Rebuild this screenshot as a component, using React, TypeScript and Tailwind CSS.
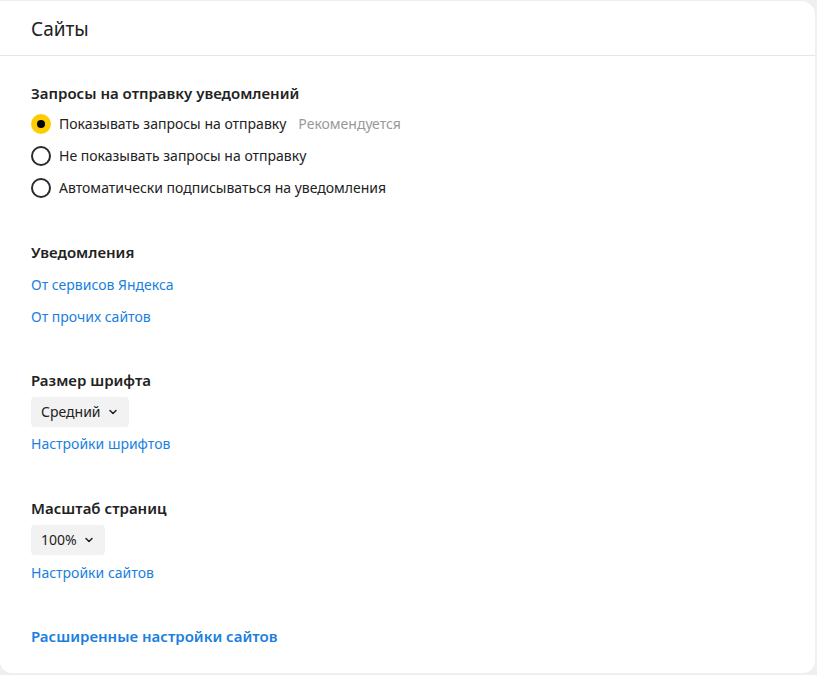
import { ChevronDown } from "lucide-react";

function Radio({ checked, label, hint }: { checked?: boolean; label: string; hint?: string }) {
  return (
    <label className="flex items-center gap-2 h-8">
      {checked ? (
        <span className="flex justify-center items-center bg-[#ffcc00] rounded-full w-5 h-5">
          <span className="bg-black rounded-full w-2 h-2" />
        </span>
      ) : (
        <span className="border-[#2b2b2b] border-2 rounded-full w-5 h-5" />
      )}
      <span>{label}</span>
      {hint && <span className="ml-1 text-[#999]">{hint}</span>}
    </label>
  );
}

function Select({ value }: { value: string }) {
  return (
    <button className="flex items-center gap-1.5 bg-[#f2f2f2] mt-[7px] px-[10px] rounded-[4px] h-[30px] text-[#222]">
      {value}
      <ChevronDown className="w-3 h-3" strokeWidth={3} />
    </button>
  );
}

function Link({ children, className }: { children: string; className: string }) {
  return <a className={"block text-[#1a7fde] leading-6 " + className}>{children}</a>;
}

export default function App() {
  return (
    <div className="bg-[#efefef] pt-px pr-[2px] pb-[2px] w-[817px] h-[675px] font-['Noto_Sans',sans-serif] text-[#222] text-sm">
      <div className="bg-white rounded-tr-[14px] rounded-b-[12px] h-full">
        <div className="flex items-center px-[31px] pt-[3px] border-[#e6e6e6] border-b h-[55px]">
          <h1 className="text-[#222] text-[19px]">Сайты</h1>
        </div>
        <div className="px-[31px] pt-[27px]">
          <section>
            <h2 className="mb-[5px] font-semibold text-[15px] leading-5">Запросы на отправку уведомлений</h2>
            <Radio checked label="Показывать запросы на отправку" hint="Рекомендуется" />
            <Radio label="Не показывать запросы на отправку" />
            <Radio label="Автоматически подписываться на уведомления" />
          </section>
          <section className="mt-[38px]">
            <h2 className="mb-[3px] font-semibold text-[15px] leading-5">Уведомления</h2>
            <Link className="mt-[11px]">От сервисов Яндекса</Link>
            <Link className="mt-2">От прочих сайтов</Link>
          </section>
          <section className="mt-[41px]">
            <h2 className="mb-[3px] font-semibold text-[15px] leading-5">Размер шрифта</h2>
            <Select value="Средний" />
            <Link className="mt-[5px]">Настройки шрифтов</Link>
          </section>
          <section className="mt-[42px]">
            <h2 className="mb-[3px] font-semibold text-[15px] leading-5">Масштаб страниц</h2>
            <Select value="100%" />
            <Link className="mt-[6px]">Настройки сайтов</Link>
          </section>
          <a className="block mt-[41px] font-semibold text-[#1a7fde] text-[15px] leading-5">Расширенные настройки сайтов</a>
        </div>
      </div>
    </div>
  );
}
